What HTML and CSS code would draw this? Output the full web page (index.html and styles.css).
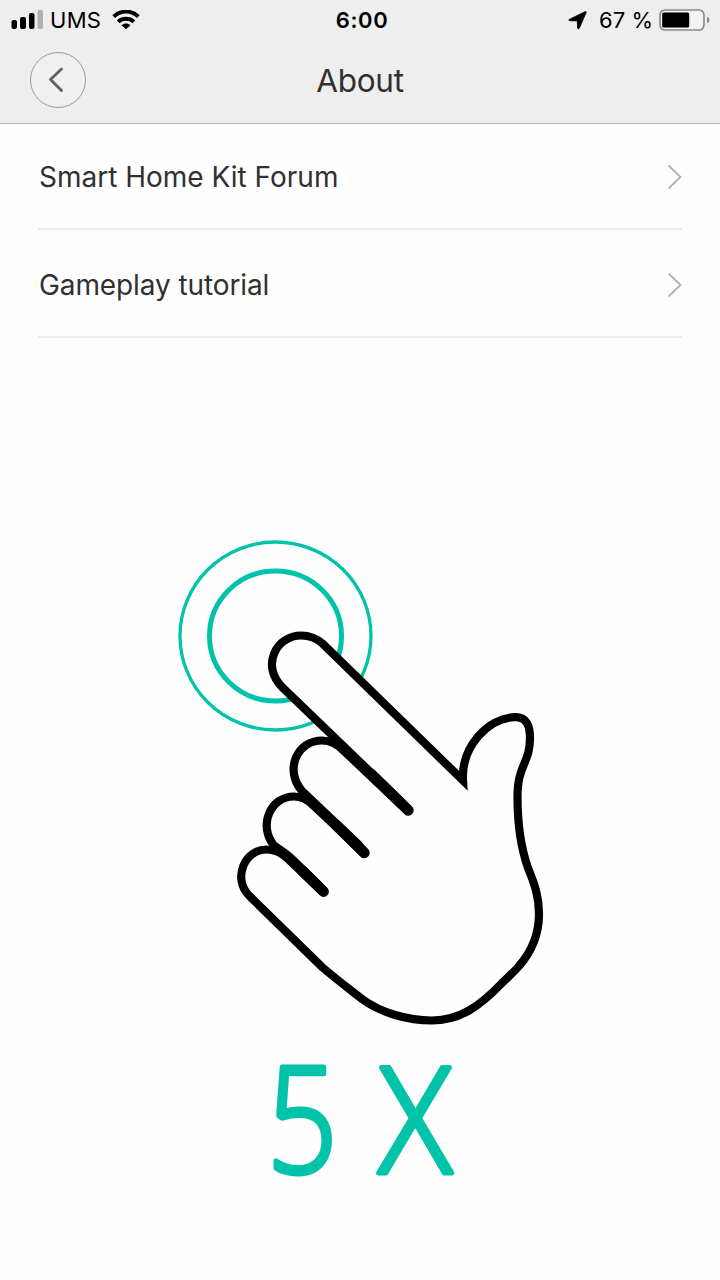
FILE: index.html
```html
<!DOCTYPE html>
<html lang="en">
<head>
<meta charset="utf-8">
<title>About</title>
<link rel="stylesheet" href="styles.css">
</head>
<body>
<header class="header">
  <div class="status">
    <div class="status-left">
      <svg class="signal" width="32" height="20" viewBox="0 0 32 20">
        <rect x="0.5" y="10" width="5.5" height="9" rx="2"/>
        <rect x="9" y="7" width="6" height="12" rx="2"/>
        <rect x="18" y="3" width="5.5" height="16" rx="2"/>
        <rect x="26.5" y="0" width="5.5" height="19" rx="2" fill="#b1b1b1"/>
      </svg>
      <span class="carrier">UMS</span>
      <svg class="wifi" width="28" height="20" viewBox="0 0 28 20" fill="none" stroke="#000" stroke-width="4">
        <path d="M1.700 6.700C8.500-.1 19.500-.1 26.300 6.700"/>
        <path d="M6.200 11.700C10.500 7.800 17.500 7.800 21.800 11.700"/>
        <path d="M14 19.300L9.600 15.200C12.200 13 15.800 13 18.400 15.200Z" fill="#000" stroke="none"/>
      </svg>
    </div>
    <span class="time">6:00</span>
    <div class="status-right">
      <svg class="locate" width="19" height="19" viewBox="0 0 19 19"><path d="M1.300 8.400L17 .7Q18.700.2 18 1.900L11.300 17.200Q10.300 18.800 9.600 17L9.300 9.900L1.800 9.700Q-.1 9.200 1.300 8.400Z" stroke="#000" stroke-width=".8"/></svg>
      <span class="percent">67 %</span>
      <svg class="battery" width="51" height="22" viewBox="0 0 51 22">
        <rect x="1" y="1" width="44" height="20" rx="5" fill="#f3f3f3" stroke="#8b8b8b" stroke-width="1.700"/>
        <rect x="3.200" y="3.500" width="27" height="15" rx="1.500"/>
        <path d="M48 7.500Q50.500 8.500 50.500 11T48 14.500Z" fill="#8b8b8b"/>
      </svg>
    </div>
  </div>
  <nav class="nav">
    <button class="back" aria-label="Back">
      <svg width="54" height="54" viewBox="1 1 54 54" fill="none"><path d="M31.500 17L20.500 27.500L31.500 38.500" stroke="#626262" stroke-width="2.900" stroke-linecap="round" stroke-linejoin="round"/></svg>
    </button>
    <h1 class="title">About</h1>
  </nav>
</header>
<main>
  <ul class="list">
    <li class="row"><span class="forum">Smart Home Kit Forum</span>
      <svg class="chevron" width="16" height="26" viewBox="0 0 16 26"><path d="M2.500 1.500L14.500 13L2.500 24.500"/></svg></li>
    <li class="row"><span class="tutorial">Gameplay tutorial</span>
      <svg class="chevron" width="16" height="26" viewBox="0 0 16 26"><path d="M2.500 1.500L14.500 13L2.500 24.500"/></svg></li>
  </ul>
  <svg class="hint" width="400" height="750" viewBox="160 530 400 750">
    <ellipse cx="275.500" cy="636" rx="95.500" ry="94" fill="none" stroke="#00c3a9" stroke-width="3.300"/>
    <ellipse cx="275.500" cy="636" rx="66" ry="65" fill="none" stroke="#00c3a9" stroke-width="5"/>
    <path class="hand" d="M402 802.500L282.500 687.500C260 665 277 635.500 301 635.500C309.500 635.500 317 638.500 323 644L463 780.500C461 747 488 717.500 515 717.200C527 717 530 726 530 738C530 764 517.500 764 517.500 797C517.500 827 521 848 528 868C535 885 539 897 539 914C539 934 533 950 519 966C514 972 508 977 502 983C480 1006 460 1020.500 432 1020.500C408 1020.500 381 1013 362 999C348 988 336 979 322 967L249 895.500C232 878 245 849 267 849.500C274 849.500 280 852 286 857L317 886.500"/>
    <path class="outline" d="M400.500 804.500L344 751C337 744 331 740.500 322 740.500C297 740.500 284 770 302 791L359 845"/>
    <path class="outline" d="M357.500 847L314 806C308 800 302 796.500 294 796.500C270 796.500 258 826 274 845.500C280 850 286 853 293 860L318 884.500"/>
    <path class="crease" d="M371 773.800L408.300 810.300"/>
    <path class="crease" d="M336 824.800L364.300 852.800"/>
    <path class="crease" d="M302 870.300L323.500 891.500"/>
    <text class="count" transform="translate(267 1172.800) scale(.84 1)">5</text>
    <text class="count" transform="translate(378.500 1172.800) scale(.93 1)">X</text>
  </svg>
</main>
</body>
</html>
```
FILE: styles.css
```css
* { box-sizing: border-box; }
body { margin: 0; width: 720px; height: 1280px; background: #fefefe; color: #303030; font-family: Inter, "Liberation Sans", sans-serif; overflow: hidden; }
.header { height: 124px; background: #eee; border-bottom: 1px solid #b5b5b5; }
.status { height: 40px; display: grid; grid-template-columns: 1fr auto 1fr; align-items: center; padding: 0 10px 0 11px; color: #000; font-size: 22px; line-height: 40px; }
.status-left, .status-right { display: flex; align-items: center; }
.status-right { justify-content: flex-end; }
.carrier { margin-left: 7px; letter-spacing: .3px; }
.wifi { margin-left: 11px; }
.time { font-weight: 600; letter-spacing: .6px; padding-left: 3px; }
.percent { margin: 0 6px 0 12px; }
.nav { height: 79px; display: grid; grid-template-columns: 56px 1fr 56px; align-items: center; padding: 0 30px; }
.back { width: 56px; height: 56px; margin-left: .4px; padding: 0; border: 1px solid #999; border-radius: 50%; background: #f0f0f0; display: flex; align-items: center; justify-content: center; }
.title { margin: 0; padding-top: 2px; text-align: center; font-size: 31.5px; font-weight: 400; letter-spacing: -.3px; line-height: 77px; }
.list { list-style: none; margin: 0; padding: 0 38px; }
.row { display: flex; align-items: center; justify-content: space-between; padding: 2px 0 0 1px; border-bottom: 2px solid #ebebeb; font-size: 28px; }
.row:first-child { height: 106px; }
.row + .row { height: 108px; padding-top: 3px; }
.tutorial { letter-spacing: -.1px; }
.chevron { fill: none; stroke: #b3b3b3; stroke-width: 1.900; }
.hint { display: block; margin: 192px 0 0 160px; }
.hand { fill: #fefefe; stroke: #000; stroke-width: 8.2; stroke-miterlimit: 10; stroke-linecap: round; }
.outline { fill: none; stroke: #000; stroke-width: 8.2; stroke-linecap: round; }
.crease { fill: none; stroke: #000; stroke-width: 10.8; stroke-linecap: round; }
.count { font-family: "Open Sans", "Noto Sans", sans-serif; font-weight: 300; font-size: 147px; fill: #00c3a9; stroke: #00c3a9; stroke-width: 5; stroke-linejoin: round; }
```
